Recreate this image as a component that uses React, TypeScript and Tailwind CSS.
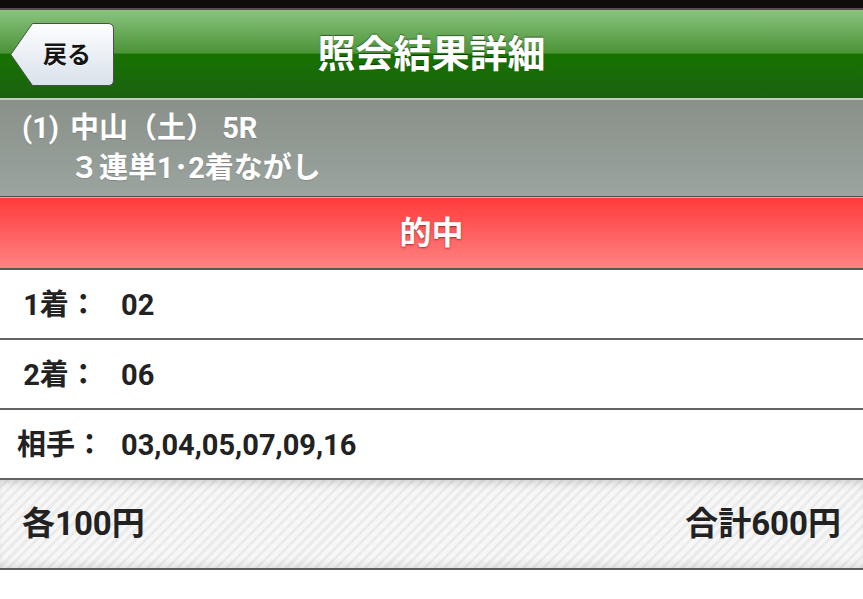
import React from 'react';

const FONT = "font-['Roboto','Noto_Sans_CJK_JP',sans-serif]";

const BackButton = () => (
  <button className="relative w-[104px] h-[63px] flex items-center justify-center pl-[10px]">
    <svg className="absolute inset-0" width="104" height="63" viewBox="0 0 104 63">
      <defs>
        <linearGradient id="backGrad" x1="0" y1="0" x2="0" y2="1">
          <stop offset="0" stopColor="#fdfeff" />
          <stop offset="1" stopColor="#d9e1eb" />
        </linearGradient>
      </defs>
      <path
        d="M22.5 0.5 H98 Q103.5 0.5 103.5 6 V57 Q103.5 62.5 98 62.5 H22.5 L0.8 31.5 Z"
        fill="url(#backGrad)"
        stroke="#4b4f4b"
        strokeWidth="1"
      />
    </svg>
    <span className="relative text-[24px] font-bold text-[#151515] [text-shadow:0_1px_0_rgba(255,255,255,0.8)]">戻る</span>
  </button>
);

type RowProps = { label: string; value: string };

const ResultRow = ({ label, value }: RowProps) => (
  <div className="flex items-center h-[70px] pt-[4px] bg-white border-b-2 border-[#636363]">
    <div className="w-[121px] text-center text-[29px] font-bold text-[#222]">{label}</div>
    <div className="text-[29px] font-bold text-[#222]">{value}</div>
  </div>
);

const App: React.FC = () => {
  return (
    <div className={`min-h-screen bg-white ${FONT}`}>
      {/* status strip */}
      <div className="h-[8px] bg-[#110c0c]" />
      <div className="h-[2px] bg-[#574d4d]" />

      {/* Header */}
      <header className="h-[88px] grid grid-cols-[1fr_auto_1fr] items-center bg-[linear-gradient(to_bottom,#8ac47e_0%,#4b9338_49%,#177300_50%,#1b6012_100%)]">
        <div className="pl-[10px] pt-[1px]">
          <BackButton />
        </div>
        <h1 className="text-[38px] font-bold text-white leading-none [text-shadow:0_-1px_1px_rgba(0,0,0,0.45)]">照会結果詳細</h1>
        <div />
      </header>
      <div className="h-[2px] bg-[#c3cbc3]" />

      {/* Race info */}
      <section className="h-[96px] flex flex-col justify-center pl-[22px] bg-[linear-gradient(to_bottom,#8a908a,#9ba49f)] text-white text-[29px] font-bold leading-[40px] [text-shadow:0_1px_1px_rgba(0,0,0,0.15)]">
        <div className="flex">
          <span className="w-[48px]">(1)</span>
          <span>中山（土） 5R</span>
        </div>
        <div className="pl-[48px]">３連単1･2着ながし</div>
      </section>
      <div className="h-[1px] bg-[#4e4e4e]" />
      <div className="h-[1px] bg-[#ff9a9a]" />

      {/* Hit banner */}
      <div className="h-[72px] flex items-center justify-center bg-[linear-gradient(to_bottom,#ff3b3b,#ff8383)] border-b-2 border-[#585858]">
        <span className="text-[32px] font-bold text-white [text-shadow:0_1px_2px_rgba(90,0,0,0.55)]">的中</span>
      </div>

      <ResultRow label="1着：" value="02" />
      <ResultRow label="2着：" value="06" />
      <ResultRow label="相手：" value="03,04,05,07,09,16" />

      {/* Totals */}
      <div className="h-[90px] flex items-center justify-between px-[22px] border-b-2 border-[#5e5e5e] bg-[repeating-linear-gradient(135deg,#f7f7f7_0px,#f7f7f7_4px,#ebebeb_4px,#ebebeb_7px)] shadow-[inset_0_8px_10px_-6px_rgba(0,0,0,0.18),inset_0_-8px_10px_-6px_rgba(0,0,0,0.12)]">
        <span className="text-[33px] font-bold text-[#222]">各100円</span>
        <span className="text-[33px] font-bold text-[#222]">合計600円</span>
      </div>
    </div>
  );
};

export default App;
